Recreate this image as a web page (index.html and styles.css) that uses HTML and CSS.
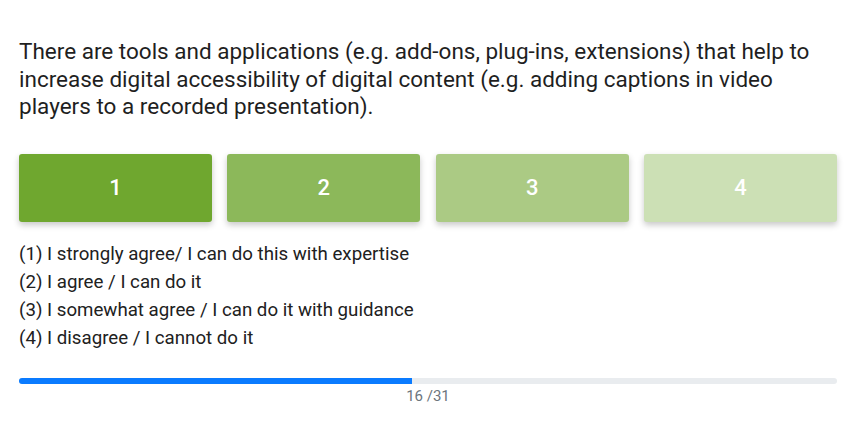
FILE: index.html
```html
<!DOCTYPE html>
<html>
<head>
<meta charset="utf-8">
<link rel="stylesheet" href="styles.css">
</head>
<body>
<div class="page">
  <p class="question">There are tools and applications (e.g. add-ons, plug-ins, extensions) that help to increase digital accessibility of digital content (e.g. adding captions in video players to a recorded presentation).</p>
  <div class="scale">
    <button class="opt o1">1</button>
    <button class="opt o2">2</button>
    <button class="opt o3">3</button>
    <button class="opt o4">4</button>
  </div>
  <ul class="legend">
    <li>(1) I strongly agree/ I can do this with expertise</li>
    <li>(2) I agree / I can do it</li>
    <li>(3) I somewhat agree / I can do it with guidance</li>
    <li>(4) I disagree / I cannot do it</li>
  </ul>
  <div class="progress"><div class="fill" style="width:48%"></div></div>
  <div class="count">16 /31</div>
</div>
</body>
</html>
```
FILE: styles.css
```css
html, body { margin: 0; padding: 0; background: #fff; }
body { font-family: Roboto, "Noto Sans", sans-serif; color: #212529; }
.page { padding: 38px 26px 0 19px; }
.question { margin: 0; font-size: 22.5px; line-height: 27.5px; color: #1f1f1f; }
.scale { display: flex; gap: 15.5px; margin-top: 33px; }
.opt {
  flex: 1; height: 68px; border: none; border-radius: 3px;
  color: #fff; font-family: Roboto, sans-serif; font-size: 22px; font-weight: 500;
  box-shadow: 0 3px 6px rgba(0,0,0,0.22);
  padding: 0;
}
.o1 { background: #6fa72f; }
.o2 { background: #8cb85a; }
.o3 { background: #abca84; }
.o4 { background: #cce0b5; }
.legend { list-style: none; margin: 18px 0 0; padding: 0; font-size: 18.7px; line-height: 28px; color: #212121; }
.progress { margin-top: 26px; height: 6px; background: #e9ecef; border-radius: 3px; overflow: hidden; }
.fill { height: 100%; background: #0a7bff; }
.count { text-align: center; font-size: 15px; color: #6c757d; margin-top: 3px; }
```
